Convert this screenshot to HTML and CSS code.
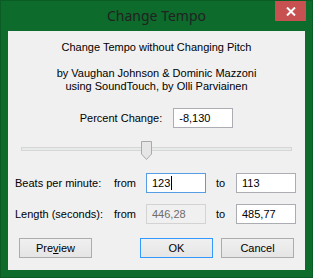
FILE: index.html
```html
<!DOCTYPE html>
<html lang="en">
<head>
  <meta charset="UTF-8">
  <title>Change Tempo</title>
  <link rel="stylesheet" href="styles.css">
</head>
<body>

  <!-- window frame -->
  <div class="window">
    <div class="title-bar">
      <span class="title">Change Tempo</span>
      <button class="close-btn">
        <svg width="10" height="9" viewBox="0 0 10 9">
          <path d="M1 0.5 L9 8.5 M9 0.5 L1 8.5" stroke="#fff" stroke-width="2" fill="none"/>
        </svg>
      </button>
    </div>

    <div class="client">
      <p class="intro">Change Tempo without Changing Pitch</p>
      <p class="credits">by Vaughan Johnson &amp; Dominic Mazzoni<br>using SoundTouch, by Olli Parviainen</p>

      <div class="percent-row">
        <span class="label">Percent Change:</span>
        <div class="field">-8,130</div>
      </div>

      <div class="slider">
        <div class="track"></div>
        <svg class="thumb" width="11" height="19" viewBox="0 0 11 19">
          <path d="M0.5 0.5 H10.5 V13 L5.5 18.5 L0.5 13 Z" fill="#e6e6e6" stroke="#a9a9a9"/>
        </svg>
      </div>

      <div class="values">
        <span class="label">Beats per minute:</span>
        <span class="from">from</span>
        <div class="field focused">123<span class="caret"></span></div>
        <span class="to">to</span>
        <div class="field">113</div>

        <span class="label">Length (seconds):</span>
        <span class="from">from</span>
        <div class="field disabled">446,28</div>
        <span class="to">to</span>
        <div class="field">485,77</div>
      </div>

      <div class="buttons">
        <button class="btn">Pre<u>v</u>iew</button>
        <button class="btn default">OK</button>
        <button class="btn">Cancel</button>
      </div>
    </div>
  </div>

</body>
</html>
```

FILE: styles.css
```css
body {
  margin: 0;
  padding: 0;
  font-family: 'Liberation Sans', Arial, sans-serif;
  font-size: 11px;
  color: #000;
  background-color: #fff;
}

.window {
  width: 313px;
  height: 278px;
  box-sizing: border-box;
  background-color: #0d6b2b;
  border: 1px solid #0a5c24;
  display: flex;
  flex-direction: column;
}

.title-bar {
  height: 30px;
  display: flex;
  justify-content: center;
  position: relative;
}

.title {
  font-family: 'Noto Sans', sans-serif;
  font-size: 14px;
  color: #222;
  line-height: 30px;
}

.close-btn {
  position: absolute;
  top: 0;
  right: 6px;
  width: 31px;
  height: 20px;
  border: none;
  padding: 0;
  background-color: #c75050;
  display: flex;
  align-items: center;
  justify-content: center;
}

.client {
  margin: 0 7px 7px 7px;
  flex: 1;
  background-color: #f0f0f0;
  padding: 10px 9px 0 7px;
  display: flex;
  flex-direction: column;
}

.intro,
.credits {
  margin: 0;
  text-align: center;
  line-height: 13px;
  padding-left: 2px;
}

.credits {
  margin-top: 13px;
}

.percent-row {
  margin-top: 15px;
  display: flex;
  justify-content: center;
  align-items: center;
  gap: 11px;
  padding-left: 2px;
}

.field {
  width: 60px;
  height: 20px;
  box-sizing: border-box;
  border: 1px solid #abadb3;
  background-color: #fff;
  padding-left: 5px;
  line-height: 18px;
  display: flex;
  align-items: center;
}

.field.focused {
  border-color: #569de5;
}

.field.disabled {
  border-color: #d3d3d3;
  background-color: #f0f0f0;
  color: #6d6d6d;
}

.caret {
  width: 1px;
  height: 14px;
  background-color: #000;
  margin-left: 1px;
}

.slider {
  margin-top: 13px;
  height: 19px;
  position: relative;
  margin-left: 6px;
  margin-right: 4px;
}

.track {
  margin-top: 6px;
  height: 4px;
  box-sizing: border-box;
  border: 1px solid #d6d6d6;
  background-color: #e7eaea;
}

.thumb {
  position: absolute;
  top: 0;
  left: 120px;
}

.values {
  margin-top: 13px;
  display: grid;
  grid-template-columns: 99px 32px 60px 30px 60px;
  grid-auto-rows: 20px;
  row-gap: 11px;
  align-items: center;
}

.to {
  padding-left: 10px;
}

.buttons {
  margin-top: 14px;
  display: flex;
  gap: 8px;
  padding-left: 4px;
  padding-right: 2px;
}

.btn {
  width: 73px;
  height: 20px;
  box-sizing: border-box;
  border: 1px solid #acacac;
  background: linear-gradient(#f0f0f0, #e5e5e5);
  font-family: 'Liberation Sans', Arial, sans-serif;
  font-size: 11px;
  color: #000;
  padding: 0;
}

.btn.default {
  margin-left: auto;
  border-color: #3399ff;
}
```
